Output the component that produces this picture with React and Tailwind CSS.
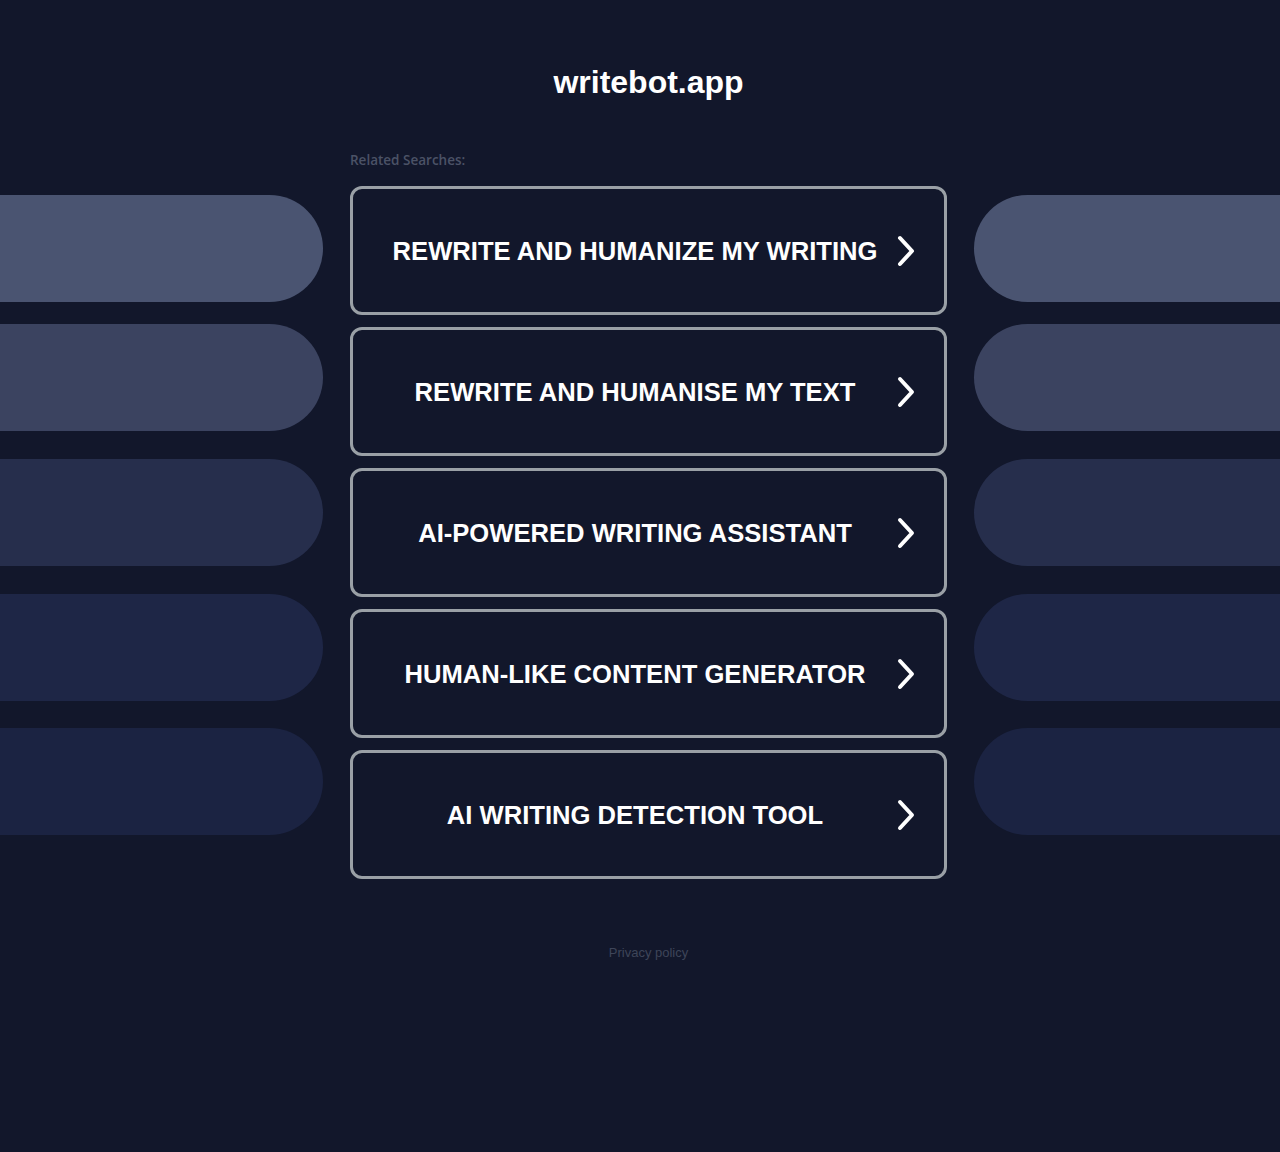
import React from "react";

const pills = [
  { mt: "mt-0", bg: "bg-[#4a5471]" },
  { mt: "mt-[22px]", bg: "bg-[#3b4360]" },
  { mt: "mt-[28px]", bg: "bg-[#262e4c]" },
  { mt: "mt-[28px]", bg: "bg-[#1e2646]" },
  { mt: "mt-[27px]", bg: "bg-[#1b2342]" },
];

const items = [
  "REWRITE AND HUMANIZE MY WRITING",
  "REWRITE AND HUMANISE MY TEXT",
  "AI-POWERED WRITING ASSISTANT",
  "HUMAN-LIKE CONTENT GENERATOR",
  "AI WRITING DETECTION TOOL",
];

function Chevron() {
  return (
    <svg width="20" height="34" viewBox="0 0 20 34" className="absolute right-[28px] top-1/2 -translate-y-1/2">
      <polyline points="4,4 16,17 4,30" fill="none" stroke="#ffffff" strokeWidth="4" strokeLinecap="round" strokeLinejoin="round" />
    </svg>
  );
}

export default function App() {
  return (
    <div className="min-h-[1152px] w-[1280px] bg-[#12172b] flex items-start" style={{ fontFamily: '"Liberation Sans", Arial, sans-serif' }}>
      <div className="w-[323px] flex flex-col pt-[195px]">
        {pills.map((p, i) => (
          <div key={i} className={`${p.mt} h-[107px] rounded-r-full ${p.bg}`} />
        ))}
      </div>
      <div className="w-[597px] ml-[27px] flex flex-col">
        <h1 className="pt-[64px] text-center text-[32px] leading-[36px] font-bold text-white">writebot.app</h1>
        <div className="mt-[51px] text-[13.5px] leading-[18px] font-semibold text-[#4b5266]" style={{ fontFamily: '"Open Sans", sans-serif' }}>
          Related Searches:
        </div>
        <div className="mt-[17px] flex flex-col gap-[12px]">
          {items.map((t) => (
            <a key={t} href="#" className="relative h-[129px] rounded-[12px] border-[3px] border-[#9aa0a6] flex items-center justify-center pt-[2px] pr-[27px] text-[25.6px] font-bold text-white">
              <span>{t}</span>
              <Chevron />
            </a>
          ))}
        </div>
        <div className="mt-[65px] text-center text-[13px] leading-[18px] text-[#3e4559]">Privacy policy</div>
      </div>
      <div className="w-[306px] ml-[27px] flex flex-col pt-[195px]">
        {pills.map((p, i) => (
          <div key={i} className={`${p.mt} h-[107px] rounded-l-full ${p.bg}`} />
        ))}
      </div>
    </div>
  );
}
